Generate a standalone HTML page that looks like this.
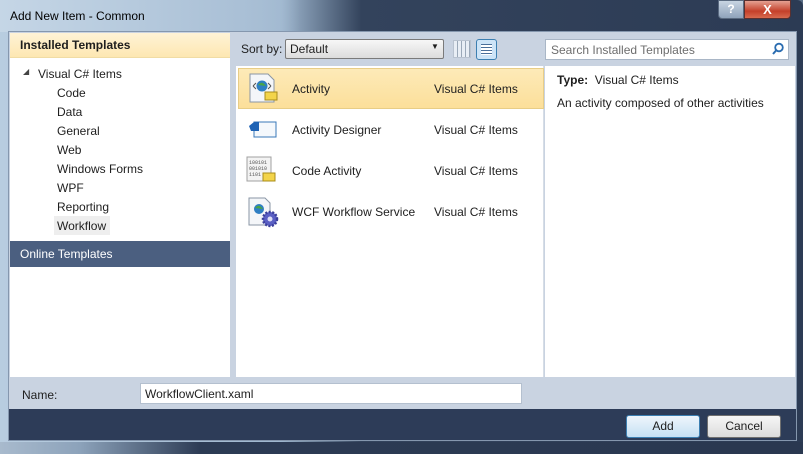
<!DOCTYPE html>
<html><head><style>
*{margin:0;padding:0;box-sizing:border-box}
body{width:803px;height:454px;overflow:hidden;font-family:"Liberation Sans",sans-serif;font-size:12px;color:#1e1e1e;background:#5a6e86;position:relative}
.a{position:absolute}
.t{white-space:nowrap}
</style></head><body>
<div class="a" style="left:0;top:0;width:803px;height:454px;background:linear-gradient(90deg,#b8cde0 0,#9fb7cf 35%,#33435c 45%,#2c3b54 100%);border-radius:6px 6px 0 0"></div>
<div class="a" style="left:0;top:0;width:300px;height:32px;background:linear-gradient(90deg,#c5d6e6,#aac0d6 80%,rgba(60,80,110,0))"></div>
<div class="a t" style="left:10px;top:9px;font-size:12px;color:#000">Add New Item - Common</div>
<div class="a" style="left:718px;top:0;width:26px;height:19px;background:linear-gradient(#c8d4e2,#8fa3bb);border:1px solid #5a6a80;border-radius:0 0 0 4px;color:#fff;text-align:center;font-weight:bold;font-size:12px;line-height:17px">?</div>
<div class="a" style="left:744px;top:0;width:47px;height:19px;background:linear-gradient(#e5a192,#c4402a 60%,#d86a4e);border:1px solid #5a3030;border-radius:0 0 4px 0;color:#fff;text-align:center;font-weight:bold;font-size:13px;line-height:17px">X</div>
<div class="a" style="left:8px;top:31px;width:789px;height:410px;background:#c9d3e1;border:1px solid #8597ae"></div>
<!-- left panel -->
<div class="a" style="left:10px;top:33px;width:220px;height:344px;background:#fff"></div>
<div class="a" style="left:10px;top:33px;width:220px;height:25px;background:linear-gradient(#fff3d6,#fde7b2);border-bottom:1px solid #f0dca5"></div>
<div class="a t" style="left:20px;top:38px;font-weight:bold">Installed Templates</div>
<div class="a t" style="left:23px;top:67px;font-size:8px;color:#444">◢</div>
<div class="a t" style="left:38px;top:67px">Visual C# Items</div>
<div class="a t" style="left:57px;top:86px">Code</div>
<div class="a t" style="left:57px;top:105px">Data</div>
<div class="a t" style="left:57px;top:124px">General</div>
<div class="a t" style="left:57px;top:143px">Web</div>
<div class="a t" style="left:57px;top:162px">Windows Forms</div>
<div class="a t" style="left:57px;top:181px">WPF</div>
<div class="a t" style="left:57px;top:200px">Reporting</div>
<div class="a" style="left:54px;top:216px;width:56px;height:19px;background:#eeeeee"></div>
<div class="a t" style="left:57px;top:219px">Workflow</div>
<div class="a" style="left:10px;top:241px;width:220px;height:26px;background:#4b5f80"></div>
<div class="a t" style="left:20px;top:247px;color:#fff">Online Templates</div>
<!-- toolbar -->
<div class="a t" style="left:241px;top:42px">Sort by:</div>
<div class="a" style="left:285px;top:39px;width:159px;height:20px;background:linear-gradient(#f7f7f7,#dcdcdc);border:1px solid #7a7a7a;border-radius:2px"></div>
<div class="a t" style="left:290px;top:42px">Default</div>
<div class="a t" style="left:431px;top:42px;font-size:8px">▼</div>
<div class="a" style="left:453px;top:40px;width:18px;height:18px;border:1px solid #b8c2cf;background:repeating-linear-gradient(90deg,#e8eef5 0 3px,#9aa8b8 3px 4px)"></div>
<div class="a" style="left:476px;top:39px;width:21px;height:21px;border:1px solid #3c7fb1;border-radius:3px;background:#cde4f7"><div style="margin:4px;width:11px;height:11px;background:repeating-linear-gradient(#4a6f9a 0 1px,#fff 1px 3px)"></div></div>
<div class="a" style="left:545px;top:39px;width:244px;height:21px;background:#fff;border:1px solid #a9b6c6"></div>
<div class="a t" style="left:551px;top:43px;color:#6d6d6d">Search Installed Templates</div>
<svg class="a" style="left:771px;top:42px" width="14" height="14"><circle cx="8" cy="5.5" r="3.8" fill="none" stroke="#2a6cb0" stroke-width="1.8"/><line x1="5.5" y1="8" x2="2" y2="12" stroke="#2a6cb0" stroke-width="2"/></svg>
<!-- middle list -->
<div class="a" style="left:236px;top:66px;width:308px;height:311px;background:#fff;border-right:1px solid #d6dde6"></div>
<div class="a" style="left:238px;top:68px;width:306px;height:41px;background:linear-gradient(#fdeab8,#fcdf9a);border:1px solid #e8cd86"></div>
<svg class="a" style="left:248px;top:72px" width="32" height="34"><path d="M2 2h18l6 6v22H2z" fill="#f4f6f9" stroke="#8a96a5"/><circle cx="14" cy="14" r="5.5" fill="#2f7fc3"/><path d="M10 13q4-5 8 1" fill="#4aa548"/><path d="M5 14l3-3M5 14l3 3M23 14l-3-3M23 14l-3 3" stroke="#555"/><rect x="17" y="20" width="12" height="8" fill="#f3d44a" stroke="#a88c1a"/></svg>
<div class="a t" style="left:292px;top:82px">Activity</div>
<div class="a t" style="left:434px;top:82px">Visual C# Items</div>
<svg class="a" style="left:247px;top:117px" width="32" height="26"><rect x="7" y="5" width="22" height="15" fill="#f4f8fc" stroke="#3a78b8"/><path d="M2 9l5-4h5v9H4z" fill="#1e63b5"/></svg>
<div class="a t" style="left:292px;top:123px">Activity Designer</div>
<div class="a t" style="left:434px;top:123px">Visual C# Items</div>
<svg class="a" style="left:246px;top:156px" width="32" height="32"><rect x="1" y="1" width="24" height="24" fill="#f3f3f3" stroke="#a0a0a0"/><text x="3" y="8" font-size="5" font-family="Liberation Mono" fill="#555">100101</text><text x="3" y="14" font-size="5" font-family="Liberation Mono" fill="#555">001010</text><text x="3" y="20" font-size="5" font-family="Liberation Mono" fill="#555">1101</text><rect x="17" y="17" width="12" height="8" fill="#f3d44a" stroke="#a88c1a"/></svg>
<div class="a t" style="left:292px;top:164px">Code Activity</div>
<div class="a t" style="left:434px;top:164px">Visual C# Items</div>
<svg class="a" style="left:247px;top:196px" width="34" height="34"><path d="M2 2h16l5 5v22H2z" fill="#f4f6f9" stroke="#8a96a5"/><circle cx="12" cy="13" r="5" fill="#2f7fc3"/><path d="M8 12q4-5 8 1" fill="#4aa548"/><circle cx="23" cy="23" r="7" fill="#5a5fc4" stroke="#3a3e9a" stroke-dasharray="2 1.5" stroke-width="2.5"/><circle cx="23" cy="23" r="2.5" fill="#dcdcf5"/></svg>
<div class="a t" style="left:292px;top:205px">WCF Workflow Service</div>
<div class="a t" style="left:434px;top:205px">Visual C# Items</div>
<!-- right panel -->
<div class="a" style="left:545px;top:66px;width:250px;height:311px;background:#fff"></div>
<div class="a t" style="left:557px;top:73px"><b>Type:</b>&nbsp; Visual C# Items</div>
<div class="a t" style="left:557px;top:96px">An activity composed of other activities</div>
<!-- name row -->
<div class="a t" style="left:22px;top:388px">Name:</div>
<div class="a" style="left:140px;top:383px;width:382px;height:21px;background:#fff;border:1px solid #b4c0cf"></div>
<div class="a t" style="left:145px;top:387px">WorkflowClient.xaml</div>
<!-- button bar -->
<div class="a" style="left:9px;top:409px;width:787px;height:31px;background:#2d3c58"></div>
<div class="a" style="left:626px;top:415px;width:74px;height:23px;background:linear-gradient(#eef6fc,#c6e0f3);border:1px solid #3c7fb1;border-radius:3px;text-align:center;line-height:21px">Add</div>
<div class="a" style="left:707px;top:415px;width:74px;height:23px;background:linear-gradient(#f6f6f6,#dcdcdc);border:1px solid #707070;border-radius:3px;text-align:center;line-height:21px">Cancel</div>
<div class="a" style="left:0;top:442px;width:803px;height:12px;background:linear-gradient(90deg,#a8bacd 0,#8ca2ba 10%,#2c3b54 25%,#2a3850 100%)"></div>
</body></html>
